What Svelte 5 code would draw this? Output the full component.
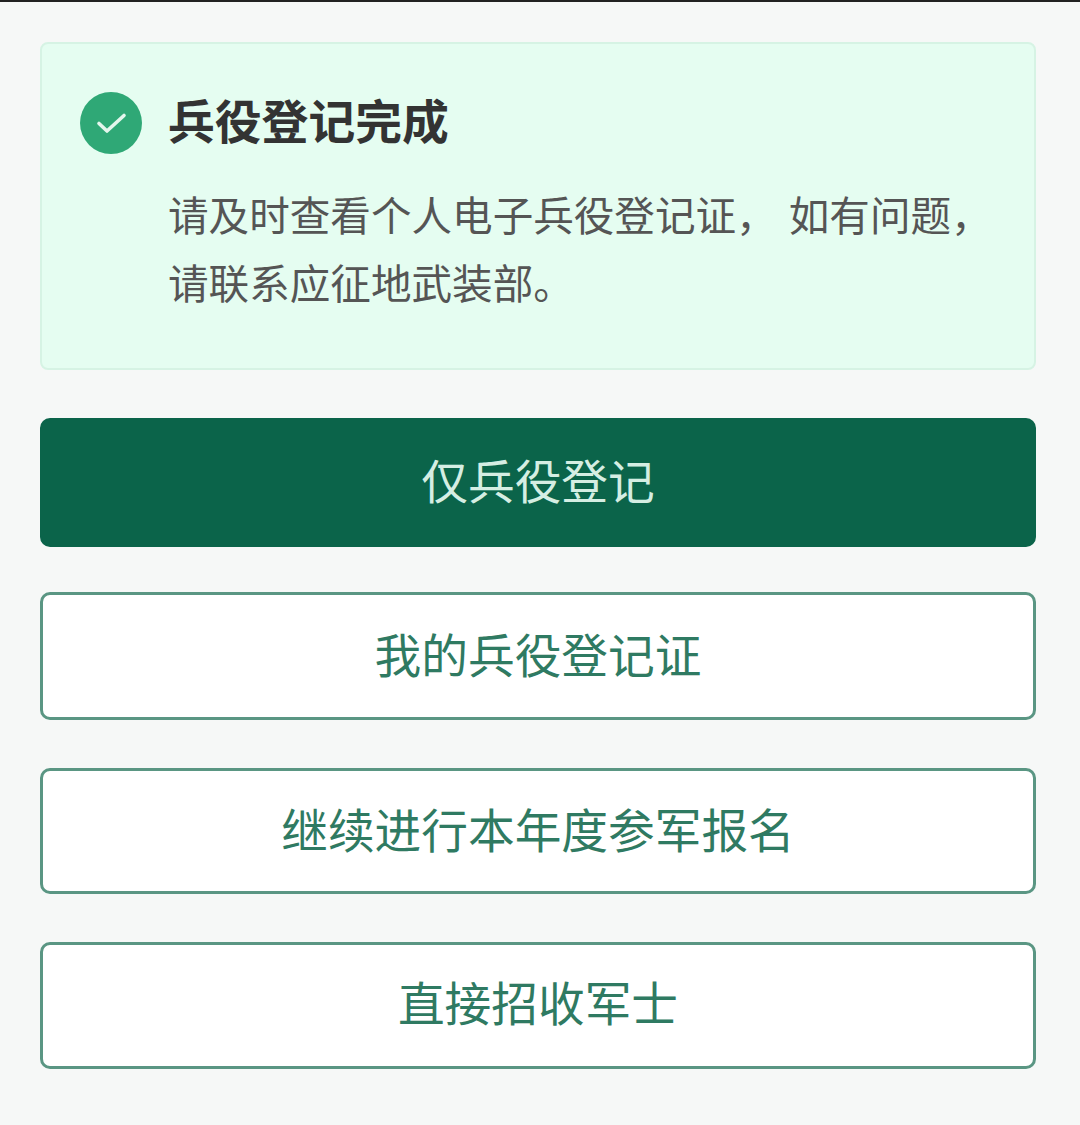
<script>
  const btns = ['我的兵役登记证', '继续进行本年度参军报名', '直接招收军士'];
</script>

<div class="page">
  <div class="notice">
    <div class="head">
      <svg class="ico" viewBox="0 0 62 62" aria-hidden="true">
        <circle cx="31" cy="31" r="31" fill="#2fa876" />
        <path d="M19 31.5 L27 39 L44 23.5" fill="none" stroke="#e4f6ed" stroke-width="3.6" stroke-linecap="round" stroke-linejoin="round" />
      </svg>
      <h1>兵役登记完成</h1>
    </div>
    <p>请及时查看个人电子兵役登记证， 如有问题，<br />请联系应征地武装部。</p>
  </div>
  <button class="primary">仅兵役登记</button>
  {#each btns as b}
    <button class="outline">{b}</button>
  {/each}
</div>

<style>
  :global(body) {
    margin: 0;
    background: #f6f8f7;
  }
  .page {
    box-sizing: border-box;
    height: 1125px;
    border-top: 2px solid #222;
    padding: 40px 44px 0 40px;
    display: flex;
    flex-direction: column;
    font-family: "Noto Sans CJK SC", sans-serif;
  }
  .notice {
    box-sizing: border-box;
    height: 328px;
    background: #e5fdf1;
    border: 2px solid #d6f3e4;
    border-radius: 8px;
    padding: 48px 38px 0;
    margin-bottom: 48px;
  }
  .head {
    display: flex;
    align-items: center;
    gap: 26px;
    height: 62px;
  }
  .ico {
    width: 62px;
    height: 62px;
    flex: none;
  }
  h1 {
    margin: 0 0 8px;
    font-size: 46.8px;
    font-weight: 700;
    color: #333;
    line-height: 62px;
  }
  p {
    margin: 26px 0 0 88px;
    font-size: 40.6px;
    line-height: 68px;
    word-spacing: 3px;
    color: #555;
    white-space: nowrap;
  }
  button {
    box-sizing: border-box;
    width: 100%;
    height: 128px;
    border-radius: 10px;
    font-family: inherit;
    font-size: 46.7px;
    padding: 0 0 8px;
    margin-bottom: 48px;
  }
  .primary {
    height: 129px;
    margin-bottom: 45px;
    background: #0b644a;
    border: 2px solid #0b644a;
    color: #d5eee3;
  }
  .outline {
    background: #fff;
    border: 3px solid #5a9683;
    color: #2f7a62;
  }
  .outline:nth-of-type(3) {
    height: 126px;
  }
  .outline:nth-of-type(4) {
    height: 127px;
    padding-bottom: 10px;
  }
</style>
